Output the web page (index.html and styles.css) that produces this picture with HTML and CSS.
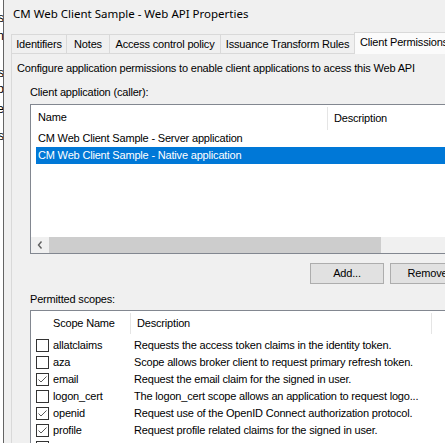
FILE: index.html
```html
<!DOCTYPE html>
<html>
<head>
<meta charset="utf-8">
<link rel="stylesheet" href="styles.css">
</head>
<body>
<div class="screen">
  <div class="behind">
    <div class="bl bl-1">ons</div>
    <div class="bl bl-2">ation</div>
    <div class="bl bl-3">ns</div>
    <div class="bl bl-4">ap</div>
    <div class="bl bl-5">ame</div>
    <div class="bl bl-6">ons</div>
  </div>
  <div class="frame-edge"></div>
  <div class="dialog">
    <div class="title">CM Web Client Sample - Web API Properties</div>
    <div class="tabs">
      <div class="tab tab-ident">Identifiers</div>
      <div class="tab tab-notes">Notes</div>
      <div class="tab tab-access">Access control policy</div>
      <div class="tab tab-issuance">Issuance Transform Rules</div>
      <div class="tab tab-client tab-active">Client Permissions</div>
    </div>
    <div class="panel">
      <div class="intro">Configure application permissions to enable client applications to acess this Web API</div>
      <div class="group">
        <div class="label label-clients">Client application (caller):</div>
        <div class="list list-clients">
          <div class="lv-head">
            <div class="hcol hcol-name">Name</div>
            <div class="hcol hcol-desc">Description</div>
          </div>
          <div class="lv-row">CM Web Client Sample - Server application</div>
          <div class="lv-row lv-selected">CM Web Client Sample - Native application</div>
          <div class="lv-spacer"></div>
          <div class="hscroll">
            <div class="hs-arrow">
              <svg width="6" height="8" viewBox="0 0 6 8"><path d="M4.5 0.5 L1.5 4 L4.5 7.5" fill="none" stroke="#606060" stroke-width="1.4"/></svg>
            </div>
            <div class="hs-thumb"></div>
          </div>
        </div>
        <div class="buttons">
          <div class="btn btn-add">Add...</div>
          <div class="btn btn-remove">Remove</div>
        </div>
        <div class="label label-scopes">Permitted scopes:</div>
        <div class="list list-scopes">
          <div class="sc-head">
            <div class="scol-name">Scope Name</div>
            <div class="scol-desc">Description</div>
            <div class="scol-rest"></div>
          </div>
          <div class="sc-row">
            <span class="cb"></span><span class="sc-name">allatclaims</span><span class="sc-desc">Requests the access token claims in the identity token.</span>
          </div>
          <div class="sc-row">
            <span class="cb"></span><span class="sc-name">aza</span><span class="sc-desc">Scope allows broker client to request primary refresh token.</span>
          </div>
          <div class="sc-row">
            <span class="cb"><svg width="11" height="11" viewBox="0 0 11 11"><path d="M1.5 5.5 L4 8 L9.5 2.5" fill="none" stroke="#5a5a5a" stroke-width="1"/></svg></span><span class="sc-name">email</span><span class="sc-desc">Request the email claim for the signed in user.</span>
          </div>
          <div class="sc-row">
            <span class="cb"></span><span class="sc-name">logon_cert</span><span class="sc-desc">The logon_cert scope allows an application to request logo...</span>
          </div>
          <div class="sc-row">
            <span class="cb"><svg width="11" height="11" viewBox="0 0 11 11"><path d="M1.5 5.5 L4 8 L9.5 2.5" fill="none" stroke="#5a5a5a" stroke-width="1"/></svg></span><span class="sc-name">openid</span><span class="sc-desc">Request use of the OpenID Connect authorization protocol.</span>
          </div>
          <div class="sc-row">
            <span class="cb"><svg width="11" height="11" viewBox="0 0 11 11"><path d="M1.5 5.5 L4 8 L9.5 2.5" fill="none" stroke="#5a5a5a" stroke-width="1"/></svg></span><span class="sc-name">profile</span><span class="sc-desc">Request profile related claims for the signed in user.</span>
          </div>
          <div class="sc-row">
            <span class="cb"></span><span class="sc-name">user_imperso...</span><span class="sc-desc">Request permission for the application to access the resource.</span>
          </div>
        </div>
      </div>
    </div>
  </div>
</div>
</body>
</html>
```
FILE: styles.css
```css
* { box-sizing: border-box; }
html, body {
  margin: 0;
  padding: 0;
  width: 445px;
  height: 443px;
  overflow: hidden;
  background: #f0f0f0;
}
body {
  font-family: "Liberation Sans", Arial, sans-serif;
  font-size: 11px;
  letter-spacing: -0.18px;
  color: #000;
}
.screen {
  display: flex;
  width: 620px;
  height: 443px;
}
.behind {
  width: 3px;
  flex: none;
  background: #fff;
  overflow: hidden;
  display: flex;
  flex-direction: column;
  font-size: 12px;
  letter-spacing: 0;
  color: #000;
}
.bl {
  display: flex;
  justify-content: flex-end;
  white-space: nowrap;
  line-height: 14px;
  height: 14px;
  flex: none;
  margin-right: -1px;
}
.bl-1 { margin-top: 11px; }
.bl-2 { margin-top: 4px; }
.bl-3 { margin-top: 23px; }
.bl-4 { margin-top: 2px; }
.bl-5 { margin-top: 6px; }
.bl-6 { margin-top: 13px; }
.frame-edge {
  width: 1px;
  flex: none;
  background: #646464;
}
.dialog {
  flex: 1;
  padding-left: 7px;
  display: flex;
  flex-direction: column;
  min-height: 0;
}
.title {
  flex: none;
  height: 32px;
  line-height: 28px;
  padding-left: 2px;
  font-family: "Noto Sans", "Open Sans", sans-serif;
  font-size: 11.5px;
  letter-spacing: 0;
  color: #000;
}
.tabs {
  flex: none;
  display: flex;
  align-items: flex-end;
  height: 21px;
  position: relative;
  z-index: 1;
}
.tab {
  flex: none;
  height: 19px;
  border: 1px solid #d9d9d9;
  border-bottom: none;
  background: #f0f0f0;
  text-align: center;
  line-height: 18px;
  white-space: nowrap;
  margin-left: -1px;
}
.tab-ident { width: 56px; margin-left: 0; }
.tab-notes { width: 44px; }
.tab-access { width: 112px; }
.tab-issuance { width: 135px; }
.tab-client { width: 100px; }
.tab-active {
  height: 22px;
  margin-bottom: -1px;
  background: #fbfbfb;
  line-height: 19px;
  padding-bottom: 2px;
}
.panel {
  flex: 1;
  min-height: 0;
  border: 1px solid #d9d9d9;
  border-right: none;
  border-bottom: none;
  background: #f0f0f0;
  padding: 7px 0 0 5px;
}
.intro {
  line-height: 14px;
  height: 14px;
  white-space: nowrap;
}
.group {
  padding-left: 13px;
}
.label {
  line-height: 14px;
  height: 14px;
  white-space: nowrap;
}
.label-clients { margin-top: 10px; }
.label-scopes { margin-top: 8px; }
.list {
  margin-top: 5px;
  border: 1px solid #828790;
  border-right: none;
  background: #fff;
}
.list-clients {
  height: 150px;
  display: flex;
  flex-direction: column;
}
.lv-head {
  height: 25px;
  display: flex;
  align-items: center;
  flex: none;
}
.hcol {
  white-space: nowrap;
}
.hcol-name {
  width: 297px;
  padding-left: 7px;
  border-right: 1px solid #e5e5e5;
  height: 23px;
  line-height: 21px;
  margin-top: 2px;
}
.hcol-desc {
  padding-left: 6px;
  line-height: 21px;
  margin-top: 2px;
}
.lv-row {
  height: 17px;
  line-height: 17px;
  margin-left: 5px;
  padding-left: 2px;
  white-space: nowrap;
  flex: none;
}
.lv-selected {
  background: #0078d7;
  color: #fff;
}
.lv-spacer {
  flex: 1;
}
.hscroll {
  height: 16px;
  flex: none;
  display: flex;
  background: #f0f0f0;
}
.hs-arrow {
  width: 18px;
  display: flex;
  align-items: center;
  justify-content: center;
}
.hs-thumb {
  width: 332px;
  background: #cdcdcd;
}
.buttons {
  display: flex;
  gap: 6px;
  margin-top: 9px;
  padding-left: 280px;
}
.btn {
  flex: none;
  height: 21px;
  border: 1px solid #adadad;
  background: #e1e1e1;
  text-align: center;
  line-height: 19px;
}
.btn-add { width: 74px; }
.btn-remove { width: 75px; }
.list-scopes {
  margin-top: 4px;
  height: 200px;
}
.sc-head {
  height: 25px;
  display: flex;
  align-items: center;
}
.scol-name {
  width: 100px;
  padding-left: 22px;
  border-right: 1px solid #e5e5e5;
  height: 21px;
  line-height: 21px;
}
.scol-desc {
  width: 301px;
  padding-left: 6px;
  border-right: 1px solid #e5e5e5;
  height: 21px;
  line-height: 21px;
}
.sc-row {
  height: 17px;
  display: flex;
  align-items: center;
  white-space: nowrap;
}
.cb {
  width: 13px;
  height: 13px;
  border: 1px solid #333;
  background: #fff;
  margin-left: 5px;
  margin-top: 1px;
  flex: none;
  display: flex;
  align-items: center;
  justify-content: center;
}
.sc-name {
  width: 85px;
  padding-left: 4px;
  flex: none;
  overflow: hidden;
}
.sc-desc {
  flex: none;
}
```
